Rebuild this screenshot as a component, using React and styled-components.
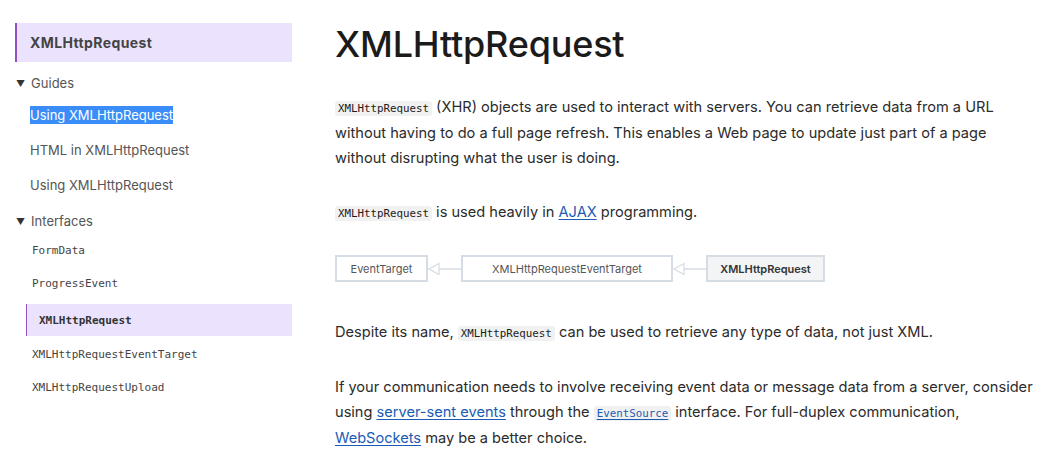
import React from 'react';
import styled, { createGlobalStyle } from 'styled-components';

const Global = createGlobalStyle`
  body {
    margin: 0;
    background: #fff;
    font-family: Inter, "Noto Sans", sans-serif;
    color: #1b1b1b;
  }
`;

const Page = styled.div`
  display: flex;
  width: 1046px;
  height: 465px;
  overflow: hidden;
`;

const Sidebar = styled.nav`
  width: 277px;
  margin-left: 15px;
  padding-top: 23px;
  flex-shrink: 0;
`;

const SideTitle = styled.div`
  height: 39px;
  display: flex;
  align-items: center;
  padding-left: 13px;
  background: #ebe3fd;
  border-left: 2px solid #8f51c4;
  font-size: 14px;
  font-weight: 700;
  letter-spacing: 0.4px;
  color: #444;
`;

const Group = styled.div`
  font-size: 13px;
  color: #555;
  margin-top: ${(p) => p.$top}px;
  display: flex;
  align-items: center;
  gap: 6px;
  height: 18px;
`;

const Caret = styled.span`
  font-size: 9px;
  color: #333;
  padding-left: 1px;
`;

const Item = styled.div`
  display: flex;
  align-items: center;
  height: 35px;
  padding-left: 15px;
  font-size: 13px;
  color: #555;
  margin-top: ${(p) => p.$mt || 0}px;
`;

const Selected = styled.span`
  background: #3a8df7;
  color: #fff;
  padding: 1px 0;
`;

const CodeItem = styled.div`
  display: flex;
  align-items: center;
  height: ${(p) => (p.$active ? 32 : 33)}px;
  margin-left: ${(p) => (p.$active ? 11 : 0)}px;
  padding-left: ${(p) => (p.$active ? 12 : 17)}px;
  font-family: "DejaVu Sans Mono", "Liberation Mono", monospace;
  font-size: 11px;
  color: ${(p) => (p.$active ? '#333' : '#444')};
  font-weight: ${(p) => (p.$active ? 700 : 400)};
  background: ${(p) => (p.$active ? '#ebe3fd' : 'transparent')};
  border-left: ${(p) => (p.$active ? '1.5px solid #8f51c4' : 'none')};
  margin-top: ${(p) => p.$mt || 0}px;
`;

const Main = styled.main`
  margin-left: 43px;
  padding-top: 22px;
  width: 700px;
`;

const Title = styled.h1`
  margin: 0;
  font-size: 36px;
  font-weight: 500;
  letter-spacing: -0.2px;
  color: #1b1b1b;
  line-height: 44px;
`;

const Para = styled.p`
  margin: ${(p) => p.$top}px 0 0;
  font-size: 14.6px;
  line-height: 25px;
  color: #2b2b2b;
`;

const Code = styled.code`
  font-family: "DejaVu Sans Mono", "Liberation Mono", monospace;
  font-size: 10.8px;
  background: #f2f1f1;
  padding: 1px 3px;
  border-radius: 3px;
  color: #1b1b1b;
`;

const Link = styled.a`
  color: #1a5bb5;
  text-decoration: underline;
  text-underline-offset: 2px;
`;

const CodeLink = styled(Code)`
  color: #1a5bb5;
  text-decoration: underline;
  text-underline-offset: 2px;
`;

const Diagram = styled.div`
  display: flex;
  align-items: center;
  margin-top: 29px;
`;

const Box = styled.div`
  width: ${(p) => p.$w}px;
  height: 23px;
  border: 2px solid #d5dce3;
  background: ${(p) => (p.$current ? '#f2f4f6' : '#fff')};
  display: flex;
  align-items: center;
  justify-content: center;
  font-size: 11px;
  font-weight: ${(p) => (p.$current ? 600 : 400)};
  color: ${(p) => (p.$current ? '#333' : '#555')};
`;

const Arrow = () => (
  <svg width="33" height="14" viewBox="0 0 33 14">
    <path d="M1 7 L11 1.5 L11 12.5 Z" fill="#fff" stroke="#d5dce3" strokeWidth="1.2" />
    <path d="M11 7 H33" stroke="#d5dce3" strokeWidth="1.5" />
  </svg>
);

export default function App() {
  return (
    <>
      <Global />
      <Page>
        <Sidebar>
          <SideTitle>XMLHttpRequest</SideTitle>
          <Group $top={12}>
            <Caret>▼</Caret>Guides
          </Group>
          <Item $mt={5}>
            <Selected>Using XMLHttpRequest</Selected>
          </Item>
          <Item>HTML in XMLHttpRequest</Item>
          <Item>Using XMLHttpRequest</Item>
          <Group $top={10}>
            <Caret>▼</Caret>Interfaces
          </Group>
          <CodeItem $mt={4}>FormData</CodeItem>
          <CodeItem>ProgressEvent</CodeItem>
          <CodeItem $active $mt={4}>XMLHttpRequest</CodeItem>
          <CodeItem $mt={2}>XMLHttpRequestEventTarget</CodeItem>
          <CodeItem>XMLHttpRequestUpload</CodeItem>
        </Sidebar>
        <Main>
          <Title>XMLHttpRequest</Title>
          <Para $top={29}>
            <Code>XMLHttpRequest</Code> (XHR) objects are used to interact with servers. You can retrieve data from a URL
            without having to do a full page refresh. This enables a Web page to update just part of a page
            without disrupting what the user is doing.
          </Para>
          <Para $top={29}>
            <Code>XMLHttpRequest</Code> is used heavily in <Link>AJAX</Link> programming.
          </Para>
          <Diagram>
            <Box $w={89}>EventTarget</Box>
            <Arrow />
            <Box $w={208}>XMLHttpRequestEventTarget</Box>
            <Arrow />
            <Box $w={115} $current>XMLHttpRequest</Box>
          </Diagram>
          <Para $top={38}>
            Despite its name, <Code>XMLHttpRequest</Code> can be used to retrieve any type of data, not just XML.
          </Para>
          <Para $top={29}>
            If your communication needs to involve receiving event data or message data from a server, consider
            using <Link>server-sent events</Link> through the <CodeLink>EventSource</CodeLink> interface. For full-duplex communication,{' '}
            <Link>WebSockets</Link> may be a better choice.
          </Para>
        </Main>
      </Page>
    </>
  );
}
